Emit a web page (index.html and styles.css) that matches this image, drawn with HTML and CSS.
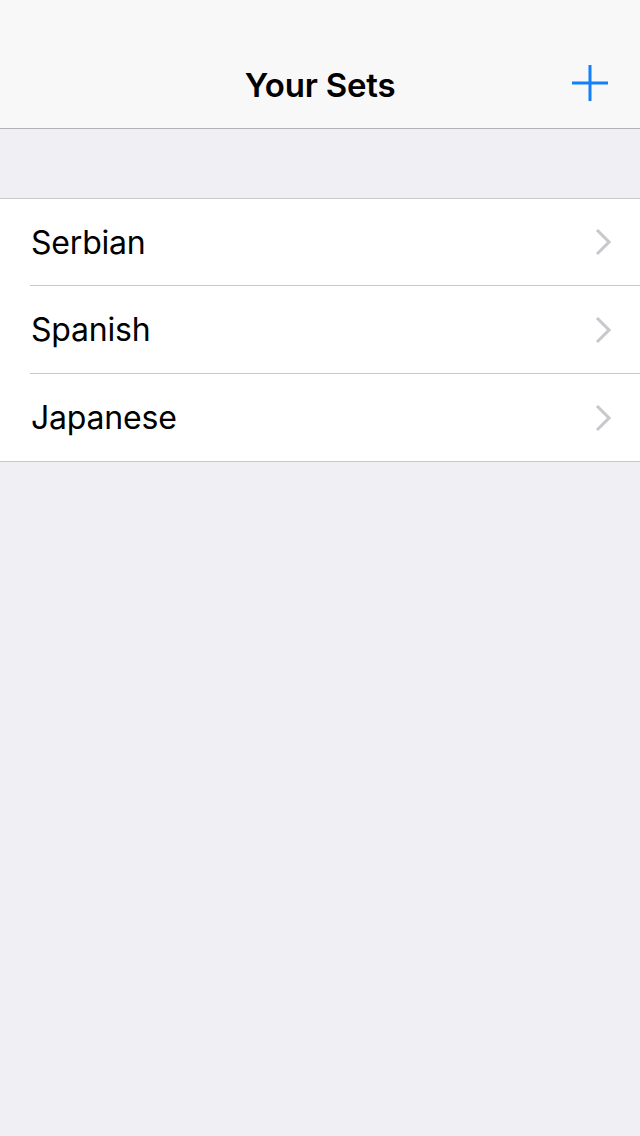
FILE: index.html
```html
<!DOCTYPE html>
<html>
<head>
<meta charset="utf-8">
<link rel="stylesheet" href="styles.css">
</head>
<body>
<div class="screen">
  <header class="navbar">
    <div class="status"></div>
    <div class="nav-row">
      <div class="nav-side"></div>
      <h1 class="title">Your Sets</h1>
      <div class="nav-side nav-right">
        <svg class="plus" width="36" height="36" viewBox="0 0 36 36">
          <rect x="16.5" y="0" width="3" height="36" fill="#157efb"/>
          <rect x="0" y="16.5" width="36" height="3" fill="#157efb"/>
        </svg>
      </div>
    </div>
  </header>
  <main class="content">
    <ul class="group">
      <li class="row"><span class="label">Serbian</span><svg class="chev" width="18" height="28" viewBox="0 0 18 28"><path d="M3 2 L15 14 L3 26" fill="none" stroke="#c7c7cc" stroke-width="3"/></svg></li>
      <li class="row"><span class="label">Spanish</span><svg class="chev" width="18" height="28" viewBox="0 0 18 28"><path d="M3 2 L15 14 L3 26" fill="none" stroke="#c7c7cc" stroke-width="3"/></svg></li>
      <li class="row"><span class="label">Japanese</span><svg class="chev" width="18" height="28" viewBox="0 0 18 28"><path d="M3 2 L15 14 L3 26" fill="none" stroke="#c7c7cc" stroke-width="3"/></svg></li>
    </ul>
  </main>
</div>
</body>
</html>
```
FILE: styles.css
```css
* { box-sizing: border-box; }
html, body { margin: 0; padding: 0; }
body {
  font-family: Inter, "Liberation Sans", sans-serif;
  background: #efeff4;
  color: #000;
}
.screen {
  width: 640px;
  height: 1136px;
  background: #efeff4;
  display: flex;
  flex-direction: column;
}
.navbar {
  background: #f8f8f8;
  border-bottom: 1px solid #b2b2b2;
  height: 129px;
}
.status { height: 40px; }
.nav-row {
  height: 88px;
  display: flex;
  align-items: center;
  justify-content: space-between;
}
.nav-side {
  width: 100px;
  display: flex;
  align-items: center;
}
.nav-right {
  justify-content: flex-end;
  padding-right: 32px;
  padding-bottom: 3px;
}
.plus { display: block; }
.title {
  margin: 0;
  font-size: 33px;
  font-weight: 600;
  letter-spacing: -0.2px;
  padding-top: 1px;
}
.content {
  padding-top: 69px;
}
.group {
  list-style: none;
  margin: 0;
  padding: 0;
  background: #fff;
  border-top: 1px solid #c8c7cc;
  border-bottom: 1px solid #c8c7cc;
}
.row {
  height: 88px;
  margin-left: 30px;
  padding-right: 28px;
  display: flex;
  align-items: center;
  justify-content: space-between;
  border-bottom: 1px solid #c8c7cc;
}
.row:first-child { height: 87px; }
.row:last-child { border-bottom: none; height: 87px; }
.label {
  font-size: 32px;
  font-weight: 400;
  letter-spacing: -0.2px;
  padding-left: 1px;
}
.chev { display: block; }
```
